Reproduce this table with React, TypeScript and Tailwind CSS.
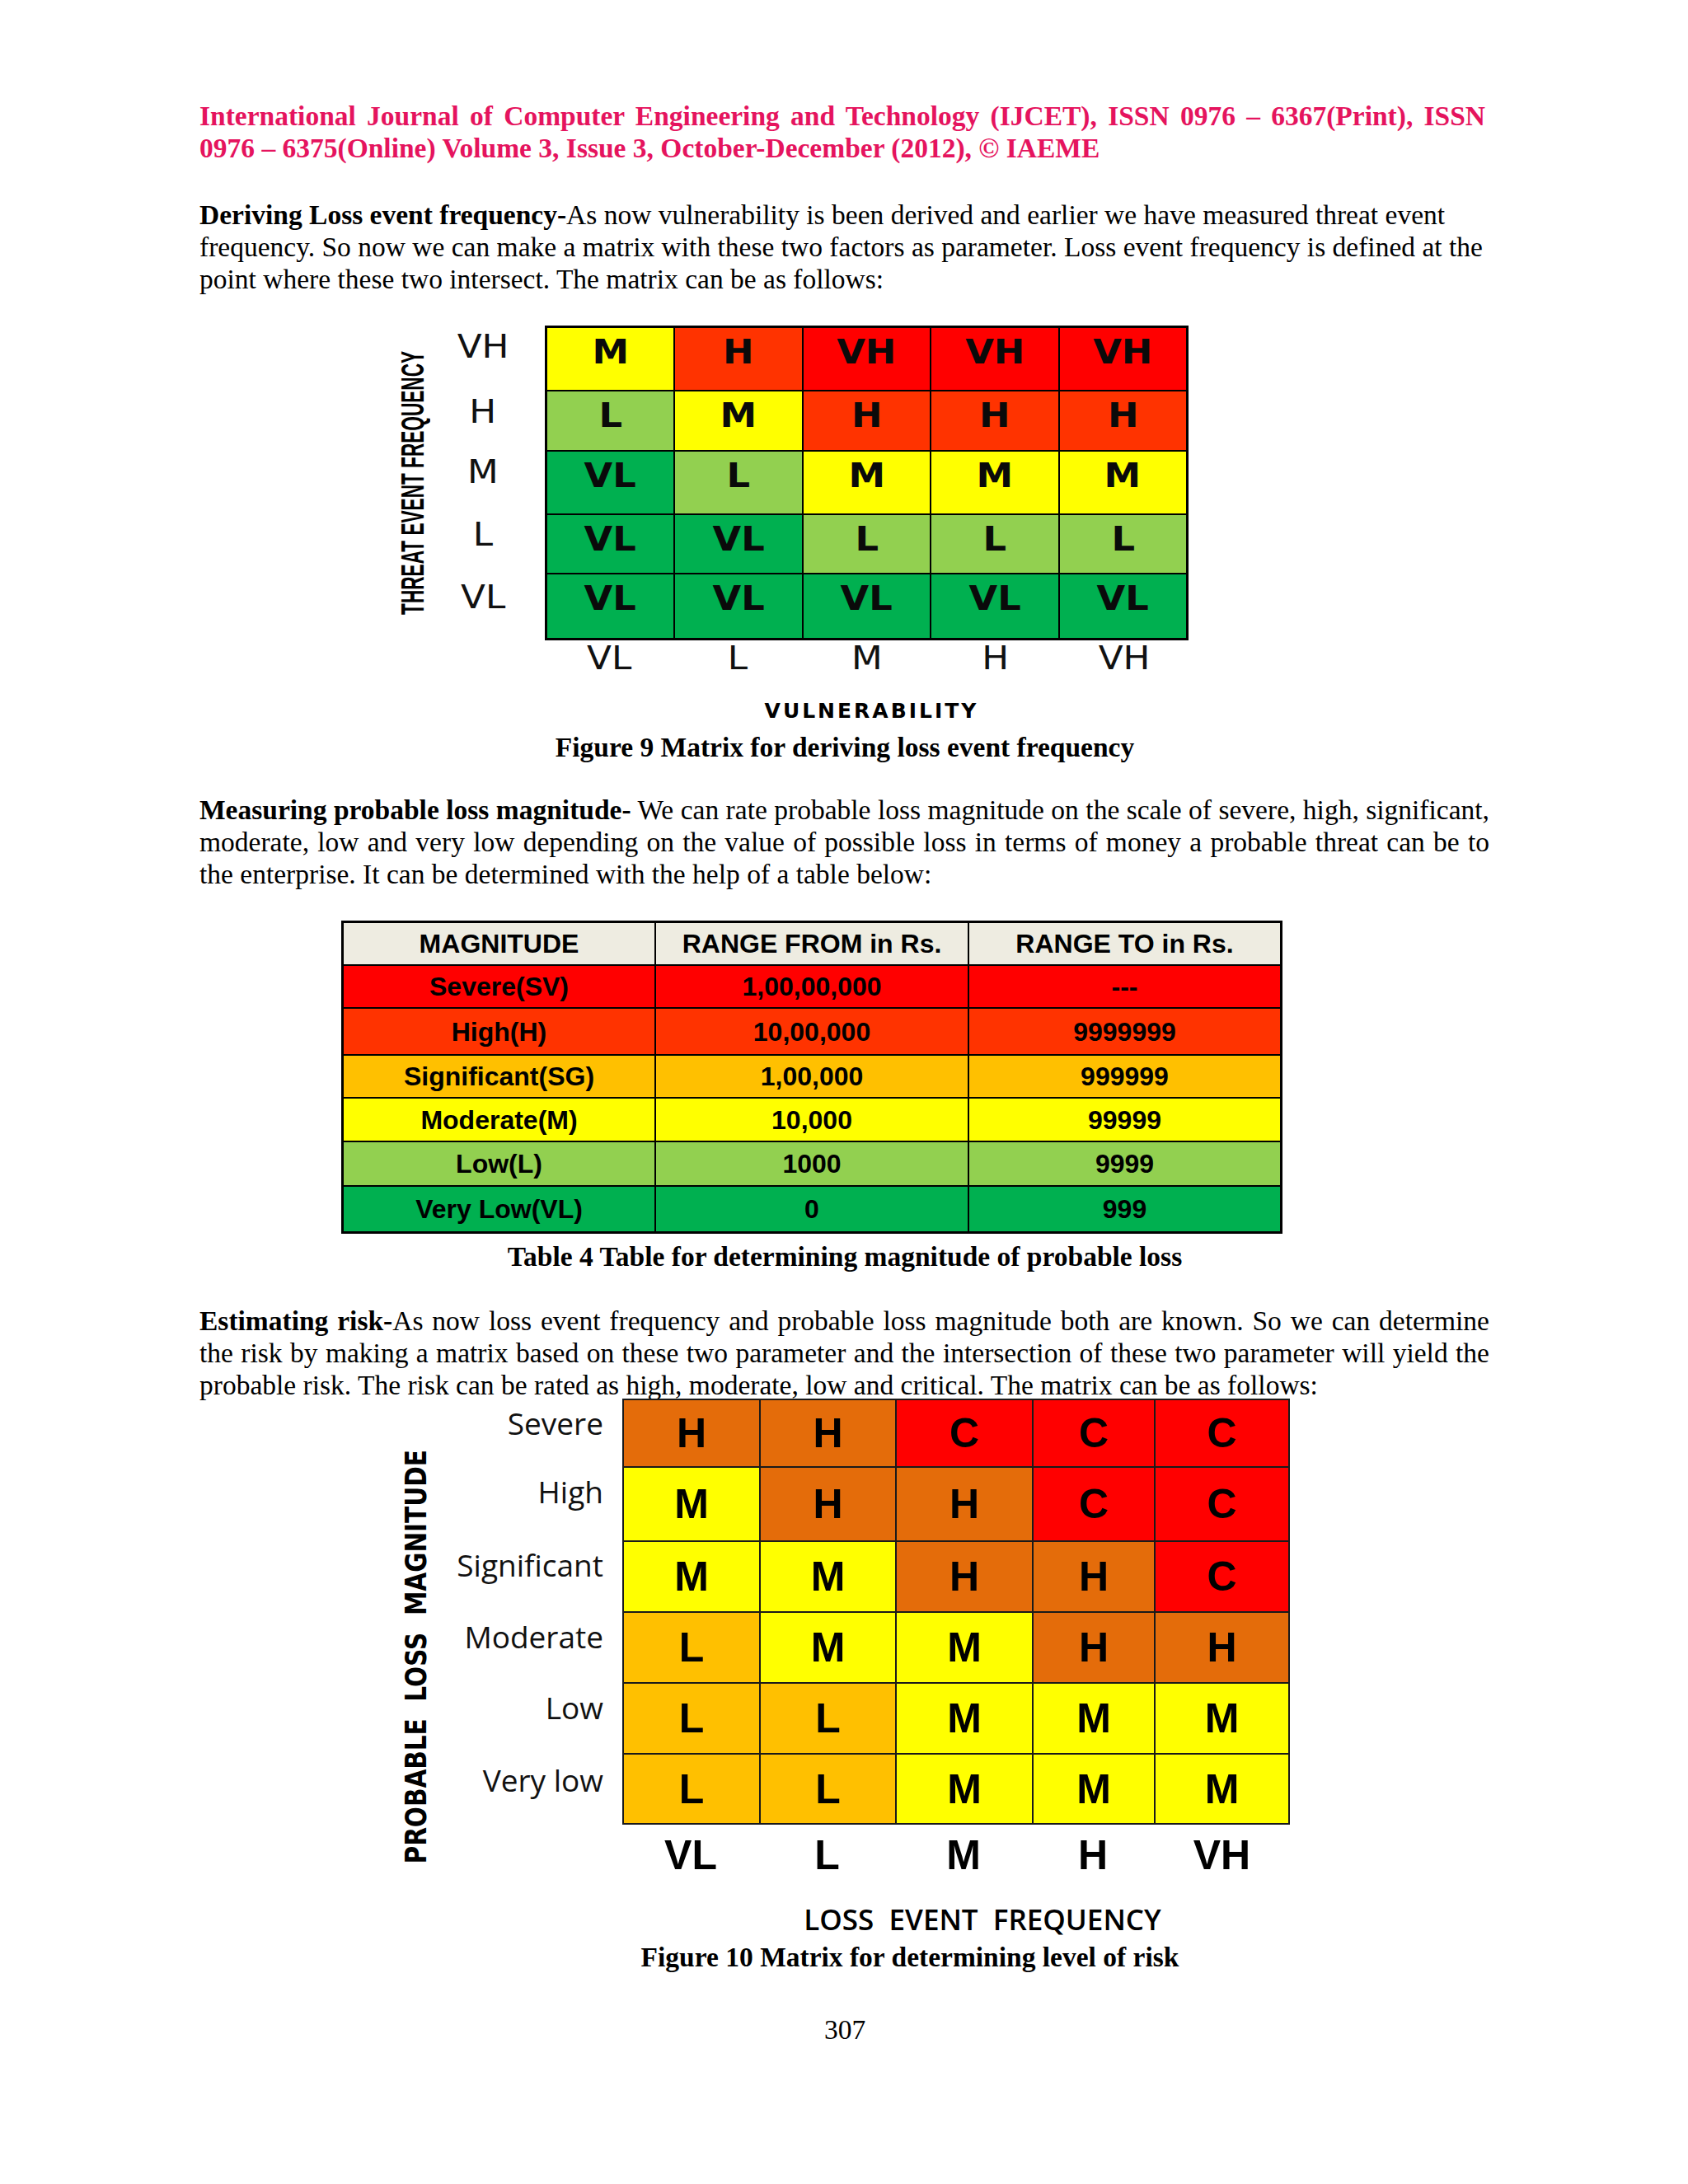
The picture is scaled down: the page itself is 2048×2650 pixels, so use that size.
import React from "react";

const serif = "font-['Liberation_Serif',serif]";

function Line({ children, justify }: { children: React.ReactNode; justify?: boolean }) {
  return (
    <div className={justify ? "whitespace-nowrap text-justify [text-align-last:justify]" : "whitespace-nowrap"}>
      {children}
    </div>
  );
}

const c9: Record<string, string> = {
  y: "bg-[#ffff00]",
  o: "bg-[#ff3300]",
  r: "bg-[#ff0000]",
  l: "bg-[#92d050]",
  g: "bg-[#00b050]",
};

const fig9: [string, string][][] = [
  [["M", "y"], ["H", "o"], ["VH", "r"], ["VH", "r"], ["VH", "r"]],
  [["L", "l"], ["M", "y"], ["H", "o"], ["H", "o"], ["H", "o"]],
  [["VL", "g"], ["L", "l"], ["M", "y"], ["M", "y"], ["M", "y"]],
  [["VL", "g"], ["VL", "g"], ["L", "l"], ["L", "l"], ["L", "l"]],
  [["VL", "g"], ["VL", "g"], ["VL", "g"], ["VL", "g"], ["VL", "g"]],
];

const c10: Record<string, string> = {
  H: "bg-[#e46c0a]",
  C: "bg-[#ff0000]",
  M: "bg-[#ffff00]",
  L: "bg-[#ffc000]",
};

const fig10: string[][] = [
  ["H", "H", "C", "C", "C"],
  ["M", "H", "H", "C", "C"],
  ["M", "M", "H", "H", "C"],
  ["L", "M", "M", "H", "H"],
  ["L", "L", "M", "M", "M"],
  ["L", "L", "M", "M", "M"],
];

const tableRows: { a: string; b: string; c: string; bg: string }[] = [
  { a: "Severe(SV)", b: "1,00,00,000", c: "---", bg: "bg-[#ff0000]" },
  { a: "High(H)", b: "10,00,000", c: "9999999", bg: "bg-[#ff3300]" },
  { a: "Significant(SG)", b: "1,00,000", c: "999999", bg: "bg-[#ffc000]" },
  { a: "Moderate(M)", b: "10,000", c: "99999", bg: "bg-[#ffff00]" },
  { a: "Low(L)", b: "1000", c: "9999", bg: "bg-[#92d050]" },
  { a: "Very Low(VL)", b: "0", c: "999", bg: "bg-[#00b050]" },
];

export default function App() {
  return (
    <div className={`w-[2048px] h-[2650px] bg-white overflow-hidden text-black ${serif}`}>
      <div className="pl-[242px] pt-[120.5px] w-[1808px] flex flex-col text-[33.5px] leading-[39px]">
        {/* Header */}
        <div className="w-[1560px] font-bold text-[#e5145e]">
          <Line justify>
            International Journal of Computer Engineering and Technology (IJCET), ISSN 0976 – 6367(Print), ISSN
          </Line>
          <Line>0976 – 6375(Online) Volume 3, Issue 3, October-December (2012), © IAEME</Line>
        </div>

        {/* Para 1 */}
        <div className="mt-[42px] w-[1566px]">
          <Line>
            <b>Deriving Loss event frequency-</b>As now vulnerability is been derived and earlier we have measured threat event
          </Line>
          <Line>
            frequency. So now we can make a matrix with these two factors as parameter. Loss event frequency is defined at the
          </Line>
          <Line>point where these two intersect. The matrix can be as follows:</Line>
        </div>

        {/* Figure 9 */}
        <div className="mt-[37.5px] flex">
          <div className="w-[40px] ml-[238px] h-[382px] flex items-center justify-center">
            <span className="[writing-mode:vertical-rl] rotate-180 scale-y-[0.58] whitespace-nowrap font-['Liberation_Sans',sans-serif] font-bold text-[39px] leading-none">
              THREAT EVENT FREQUENCY
            </span>
          </div>
          <div className="w-[132px] flex flex-col items-center font-['DejaVu_Sans',sans-serif] text-[39px] leading-[40px] text-[#111]">
            <div className="mt-[6px] scale-x-[1.12]">VH</div>
            <div className="mt-[39px] scale-x-[1.12]">H</div>
            <div className="mt-[33px] scale-x-[1.12]">M</div>
            <div className="mt-[36px] scale-x-[1.12]">L</div>
            <div className="mt-[36px] scale-x-[1.12]">VL</div>
          </div>
          <div className="ml-[9px] w-[781px] h-[382px] grid grid-cols-5 grid-rows-[75px_71px_75px_70px_77px] gap-[2px] bg-black border-[3px] border-black">
            {fig9.flat().map(([t, c], i) => (
              <div
                key={i}
                className={`${c9[c]} flex justify-center items-start pt-[9px] font-['DejaVu_Sans',sans-serif] font-bold text-[40px] leading-none text-[#0a0a0a]`}
              >
                <span className="inline-block scale-x-[1.12]">{t}</span>
              </div>
            ))}
          </div>
        </div>
        <div className="ml-[419px] w-[781px] mt-[2px] grid grid-cols-5 text-center font-['DejaVu_Sans',sans-serif] text-[39px] leading-[40px] text-[#111]">
          {["VL", "L", "M", "H", "VH"].map((t) => (
            <div key={t}>
              <span className="inline-block scale-x-[1.12]">{t}</span>
            </div>
          ))}
        </div>
        <div className="ml-[419px] w-[781px] mt-[29px] pl-[12px] text-center font-['DejaVu_Sans',sans-serif] font-bold text-[25px] leading-[30px] tracking-[3px]">
          VULNERABILITY
        </div>
        <div className="mt-[8.5px] text-center font-bold w-[1566px]">
          Figure 9 Matrix for deriving loss event frequency
        </div>

        {/* Para 2 */}
        <div className="mt-[37px] w-[1565px]">
          <Line justify>
            <b>Measuring probable loss magnitude-</b> We can rate probable loss magnitude on the scale of severe, high, significant,
          </Line>
          <Line justify>
            moderate, low and very low depending on the value of possible loss in terms of money a probable threat can be to
          </Line>
          <Line>the enterprise. It can be determined with the help of a table below:</Line>
        </div>

        {/* Table 4 */}
        <div className="mt-[37.5px] ml-[172px] w-[1142px] h-[380px] grid grid-cols-[377px_378px_377px] grid-rows-[50px_50px_55px_50px_51px_52px_54px] gap-[2px] bg-black border-[3px] border-black font-['Liberation_Sans',sans-serif] font-bold text-[32px] leading-none">
          {["MAGNITUDE", "RANGE FROM in Rs.", "RANGE TO in Rs."].map((h) => (
            <div key={h} className="bg-[#eeece1] flex items-center justify-center">
              {h}
            </div>
          ))}
          {tableRows.map((r) => (
            <React.Fragment key={r.a}>
              <div className={`${r.bg} flex items-center justify-center`}>{r.a}</div>
              <div className={`${r.bg} flex items-center justify-center`}>{r.b}</div>
              <div className={`${r.bg} flex items-center justify-center`}>{r.c}</div>
            </React.Fragment>
          ))}
        </div>
        <div className="mt-[7.5px] text-center font-bold w-[1566px]">
          Table 4 Table for determining magnitude of probable loss
        </div>

        {/* Para 3 */}
        <div className="mt-[39px] w-[1565px]">
          <Line justify>
            <b>Estimating risk-</b>As now loss event frequency and probable loss magnitude both are known. So we can determine
          </Line>
          <Line justify>
            the risk by making a matrix based on these two parameter and the intersection of these two parameter will yield the
          </Line>
          <Line>probable risk. The risk can be rated as high, moderate, low and critical. The matrix can be as follows:</Line>
        </div>

        {/* Figure 10 */}
        <div className="-mt-[2.5px] flex h-[579px]">
          <div className="w-[40px] ml-[243px] h-[579px] pt-[47px] flex items-center justify-center">
            <span className="[writing-mode:vertical-rl] rotate-180 scale-y-[0.82] whitespace-pre font-['DejaVu_Sans',sans-serif] font-bold text-[36px] leading-none">
              {"PROBABLE  LOSS  MAGNITUDE"}
            </span>
          </div>
          <div className="w-[207px] flex flex-col items-end font-['Open_Sans',sans-serif] text-[37px] leading-[48px] text-[#111]">
            <div className="mt-[6px]">Severe</div>
            <div className="mt-[35px]">High</div>
            <div className="mt-[41px]">Significant</div>
            <div className="mt-[39px]">Moderate</div>
            <div className="mt-[38px]">Low</div>
            <div className="mt-[40px]">Very low</div>
          </div>
          <div className="ml-[23px] flex flex-col">
            <div className="w-[810px] h-[517px] grid grid-cols-[164px_163px_164px_146px_161px] grid-rows-[80px_88px_84px_84px_84px_83px] gap-[2px] bg-[#1a1a1a] border-2 border-[#1a1a1a]">
              {fig10.flat().map((t, i) => (
                <div
                  key={i}
                  className={`${c10[t]} flex items-center justify-center font-['Liberation_Sans',sans-serif] font-bold text-[50px] leading-none`}
                >
                  {t}
                </div>
              ))}
            </div>
            <div className="mt-[12px] w-[810px] grid grid-cols-[166px_165px_166px_148px_165px] text-center font-['Liberation_Sans',sans-serif] font-bold text-[50px] leading-[50px]">
              {["VL", "L", "M", "H", "VH"].map((t) => (
                <div key={t}>{t}</div>
              ))}
            </div>
          </div>
        </div>
        <div className="ml-[513px] w-[810px] mt-[35px] pl-[64px] text-center whitespace-pre font-['Open_Sans',sans-serif] font-semibold text-[35px] leading-[36px]">
          {"LOSS  EVENT  FREQUENCY"}
        </div>
        <div className="mt-[7.5px] text-center font-bold w-[1566px] pl-[158px]">
          Figure 10 Matrix for determining level of risk
        </div>

        {/* Page number */}
        <div className="mt-[49px] text-center w-[1566px]">307</div>
      </div>
    </div>
  );
}
